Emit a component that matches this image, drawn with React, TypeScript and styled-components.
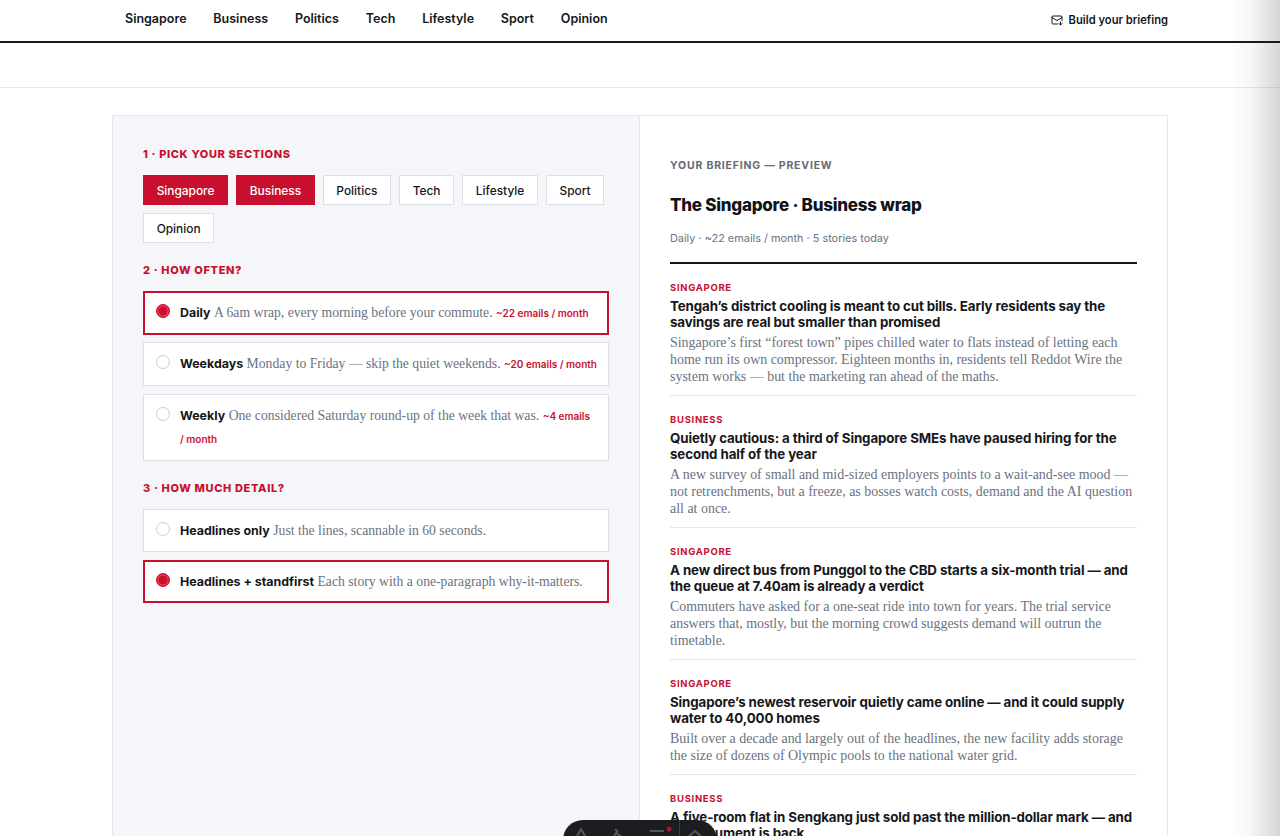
import styled, { createGlobalStyle } from "styled-components";

const sans = `"Inter", "Liberation Sans", sans-serif`;
const serif = `"Liberation Serif", serif`;

const GlobalStyle = createGlobalStyle`
  html, body {
    margin: 0;
    height: 836px;
    overflow: hidden;
    background: #fff;
    color: #111318;
    font-family: ${sans};
  }
`;

const NavBar = styled.header`
  height: 41px;
  border-bottom: 2px solid #1a1c20;
  padding: 0 112px 0 125px;
  display: flex;
  align-items: center;
  justify-content: space-between;
`;

const NavLinks = styled.nav`
  display: flex;
  gap: 26.8px;
  margin-top: -4px;
`;

const NavLink = styled.a`
  font-size: 12.5px;
  font-weight: 600;
  color: #15171b;
`;

const BriefingLink = styled.a`
  display: flex;
  align-items: center;
  gap: 6px;
  font-size: 11.2px;
  font-weight: 600;
  color: #15171b;
  margin-top: -1px;
`;

const SubBar = styled.div`
  height: 44px;
  border-bottom: 1px solid #e8eaed;
`;

const Builder = styled.main`
  margin: 27px 112px 0;
  height: 720px;
  display: grid;
  grid-template-columns: 527px 1fr;
  border: 1px solid #e6e8ec;
  border-bottom: 0;
`;

const Options = styled.section`
  background: #f4f6f9;
  border-right: 1px solid #e6e8ec;
  padding: 31px 30px 0;
`;

const StepLabel = styled.h2`
  margin: 0 0 14px;
  font-size: 11px;
  line-height: 14px;
  font-weight: 800;
  letter-spacing: 0.65px;
  color: #c8102e;
`;

const Chips = styled.div`
  display: flex;
  flex-wrap: wrap;
  gap: 8px;
  margin-bottom: 20px;
`;

const Chip = styled.button<{ $on?: boolean }>`
  height: 30px;
  padding: 0 12.65px;
  border: 1px solid ${(p) => (p.$on ? "#c8102e" : "#dde1e7")};
  background: ${(p) => (p.$on ? "#c8102e" : "#fff")};
  color: ${(p) => (p.$on ? "#fff" : "#15171b")};
  font-family: ${sans};
  font-size: 11.9px;
  font-weight: 500;
`;

const Choices = styled.div`
  display: flex;
  flex-direction: column;
  gap: 7.8px;
  margin-bottom: 20px;
`;

const Choice = styled.div<{ $on?: boolean }>`
  display: flex;
  gap: 10px;
  padding: ${(p) => (p.$on ? "8px 8px 8px 11px" : "9px 9px 9px 12px")};
  border: ${(p) => (p.$on ? "2px solid #c8102e" : "1px solid #dde1e7")};
  background: #fff;
`;

const Radio = styled.span<{ $on?: boolean }>`
  flex: none;
  box-sizing: border-box;
  width: 14px;
  height: 14px;
  margin-top: ${(p) => (p.$on ? "3px" : "3px")};
  border-radius: 50%;
  border: 1px solid ${(p) => (p.$on ? "#c8102e" : "#c9cdd3")};
  background: ${(p) => (p.$on ? "#c8102e" : "#fff")};
  box-shadow: ${(p) => (p.$on ? "inset 0 0 0 1.5px #ee3a55" : "none")};
`;

const ChoiceText = styled.div`
  font-size: 12.4px;
  line-height: 23.5px;
`;

const ChoiceName = styled.strong`
  font-size: 12.4px;
  line-height: 1;
  font-weight: 700;
  color: #15171b;
`;

const ChoiceNote = styled.span`
  font-family: ${serif};
  font-size: 13.7px;
  line-height: 1;
  color: #6b7280;
`;

const ChoiceCount = styled.span`
  font-size: 10px;
  line-height: 1;
  font-weight: 600;
  color: #c8102e;
`;

const Preview = styled.section`
  padding: 43px 30px 0;
  overflow: hidden;
`;

const PreviewKicker = styled.div`
  font-size: 10.5px;
  line-height: 14px;
  font-weight: 700;
  letter-spacing: 0.8px;
  color: #646b78;
`;

const PreviewTitle = styled.h1`
  margin: 21px 0 0;
  font-size: 17px;
  line-height: 22px;
  font-weight: 800;
  letter-spacing: -0.25px;
`;

const PreviewMeta = styled.div`
  margin: 14px 0 18px;
  padding-bottom: 16px;
  border-bottom: 2px solid #15171b;
  font-size: 10.9px;
  line-height: 16px;
  color: #6b7280;
`;

const Story = styled.article`
  padding-bottom: 10px;
  margin-bottom: 18px;
  border-bottom: 1px solid #e4e6ea;
`;

const StorySection = styled.div`
  font-size: 9.5px;
  line-height: 12px;
  font-weight: 700;
  letter-spacing: 0.7px;
  color: #c8102e;
`;

const StoryTitle = styled.h3`
  margin: 4px 0 4px;
  font-size: 13.3px;
  line-height: 16px;
  font-weight: 700;
  letter-spacing: -0.1px;
  color: #15171b;
`;

const StoryBody = styled.p`
  margin: 0;
  font-family: ${serif};
  font-size: 13.95px;
  line-height: 17px;
  color: #6b7280;
`;

const RightFade = styled.div`
  position: fixed;
  top: 0;
  right: 0;
  width: 50px;
  height: 100%;
  background: linear-gradient(to right, rgba(0, 0, 0, 0), rgba(0, 0, 0, 0.03) 40%, rgba(0, 0, 0, 0.16));
  pointer-events: none;
`;

const Dock = styled.div`
  position: fixed;
  left: 563px;
  top: 820px;
  width: 154px;
  height: 40px;
  border-radius: 20px;
  background: #1c1d21;
  color: #55565c;
`;

const sections = ["Singapore", "Business", "Politics", "Tech", "Lifestyle", "Sport", "Opinion"];

const frequency = [
  { name: "Daily", note: "A 6am wrap, every morning before your commute.", count: "~22 emails /\u00a0month", on: true },
  { name: "Weekdays", note: "Monday to Friday — skip the quiet weekends.", count: "~20 emails /\u00a0month" },
  { name: "Weekly", note: "One considered Saturday round-up of the week that was.", count: "~4 emails /\u00a0month" },
];

const detail = [
  { name: "Headlines only", note: "Just the lines, scannable in 60 seconds." },
  { name: "Headlines + standfirst", note: "Each story with a one-paragraph why-it-matters.", on: true },
];

const stories = [
  {
    section: "SINGAPORE",
    title: "Tengah’s district cooling is meant to cut bills. Early residents say the savings are real but smaller than promised",
    body: "Singapore’s first “forest town” pipes chilled water to flats instead of letting each home run its own compressor. Eighteen months in, residents tell Reddot Wire the system works — but the marketing ran ahead of the maths.",
  },
  {
    section: "BUSINESS",
    title: "Quietly cautious: a third of Singapore SMEs have paused hiring for the second half of the year",
    body: "A new survey of small and mid-sized employers points to a wait-and-see mood — not retrenchments, but a freeze, as bosses watch costs, demand and the AI question all at once.",
  },
  {
    section: "SINGAPORE",
    title: "A new direct bus from Punggol to the CBD starts a six-month trial — and the queue at 7.40am is already a verdict",
    body: "Commuters have asked for a one-seat ride into town for years. The trial service answers that, mostly, but the morning crowd suggests demand will outrun the timetable.",
  },
  {
    section: "SINGAPORE",
    title: "Singapore’s newest reservoir quietly came online — and it could supply water to 40,000 homes",
    body: "Built over a decade and largely out of the headlines, the new facility adds storage the size of dozens of Olympic pools to the national water grid.",
  },
  {
    section: "BUSINESS",
    title: "A five-room flat in Sengkang just sold past the million-dollar mark — and the argument is back",
    body: "",
  },
];

function MailIcon() {
  return (
    <svg width="12" height="12" viewBox="0 0 24 24" fill="none" stroke="currentColor" strokeWidth="2" strokeLinecap="round" strokeLinejoin="round">
      <path d="M22 13V6a2 2 0 0 0-2-2H4a2 2 0 0 0-2 2v12a2 2 0 0 0 2 2h9" />
      <path d="m22 7-10 6L2 7" />
      <path d="M19 16v6M16 19l3 3 3-3" />
    </svg>
  );
}

function DockIcons() {
  return (
    <svg width="154" height="16" viewBox="0 0 154 16" fill="none" stroke="currentColor" strokeWidth="2">
      <path d="M13 18 18 9l5 9" />
      <path d="M52 9l3 3M50 18l3-5 7 5" />
      <path d="M87 11h14" />
      <circle cx="106" cy="9" r="2.5" fill="#a01830" stroke="none" />
      <path d="M116.5 0v16" stroke="#3a3b40" strokeWidth="1" />
      <path d="M125 17l7-6 7 6" />
    </svg>
  );
}

export default function App() {
  return (
    <>
      <GlobalStyle />
      <NavBar>
        <NavLinks>
          {sections.map((s) => (
            <NavLink key={s}>{s}</NavLink>
          ))}
        </NavLinks>
        <BriefingLink>
          <MailIcon />
          Build your briefing
        </BriefingLink>
      </NavBar>
      <SubBar />
      <Builder>
        <Options>
          <StepLabel>1 · PICK YOUR SECTIONS</StepLabel>
          <Chips>
            {sections.map((s) => (
              <Chip key={s} $on={s === "Singapore" || s === "Business"}>
                {s}
              </Chip>
            ))}
          </Chips>
          <StepLabel>2 · HOW OFTEN?</StepLabel>
          <Choices>
            {frequency.map((f) => (
              <Choice key={f.name} $on={f.on}>
                <Radio $on={f.on} />
                <ChoiceText>
                  <ChoiceName>{f.name}</ChoiceName> <ChoiceNote>{f.note}</ChoiceNote>{" "}
                  <ChoiceCount>{f.count}</ChoiceCount>
                </ChoiceText>
              </Choice>
            ))}
          </Choices>
          <StepLabel>3 · HOW MUCH DETAIL?</StepLabel>
          <Choices>
            {detail.map((d) => (
              <Choice key={d.name} $on={d.on}>
                <Radio $on={d.on} />
                <ChoiceText>
                  <ChoiceName>{d.name}</ChoiceName> <ChoiceNote>{d.note}</ChoiceNote>
                </ChoiceText>
              </Choice>
            ))}
          </Choices>
        </Options>
        <Preview>
          <PreviewKicker>YOUR BRIEFING — PREVIEW</PreviewKicker>
          <PreviewTitle>The Singapore · Business wrap</PreviewTitle>
          <PreviewMeta>Daily · ~22 emails / month · 5 stories today</PreviewMeta>
          {stories.map((s) => (
            <Story key={s.title}>
              <StorySection>{s.section}</StorySection>
              <StoryTitle>{s.title}</StoryTitle>
              <StoryBody>{s.body}</StoryBody>
            </Story>
          ))}
        </Preview>
      </Builder>
      <RightFade />
      <Dock>
        <DockIcons />
      </Dock>
    </>
  );
}
